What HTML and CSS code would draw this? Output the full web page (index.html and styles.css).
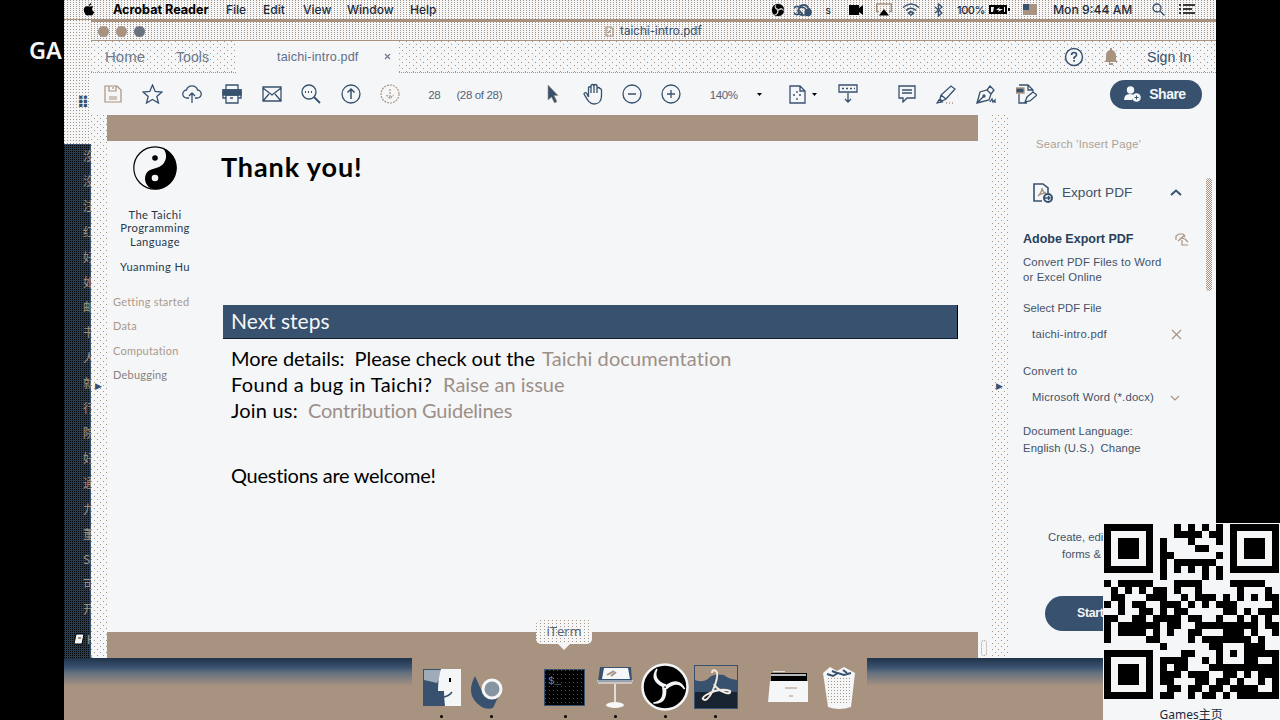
FILE: index.html
```html
<!DOCTYPE html>
<html lang="en">
<head>
<meta charset="utf-8">
<title>taichi-intro.pdf</title>
<link rel="stylesheet" href="styles.css">
</head>
<body>
<div class="stage">
  <div class="bar"><span class="ga">GA</span></div>
  <div class="desktop">
    <header class="menubar">
      <svg class="apple" width="12" height="13" viewBox="0 0 12 13"><path d="M6 3.5C7 3.4 8 2.7 10.500 3.600C8.500 5 8.800 8 11.300 9C10.500 11 9.300 12.800 8 12.500C6.800 12 6 12 5 12.500C3 13.300 0 8.500 1 5.500C1.800 3 4 3 6 3.500ZM5.800 3C5.800 1.500 6.800.5 8.200 0C8.400 1.500 7.300 2.900 5.800 3Z"/></svg>
      <b class="m-app">Acrobat Reader</b><span class="m1">File</span><span class="m2">Edit</span><span class="m3">View</span><span class="m4">Window</span><span class="m5">Help</span>
      <div class="status">
        <svg width="14" height="14" viewBox="0 0 48 48"><use href="#obs"/></svg>
        <svg width="18" height="14" viewBox="0 0 18 14" class="ln"><path d="M5 11a4 4 0 1 1 0-7c2-3 8-3 9 1a4 4 0 0 1 1 7H9L5 7m4 5a4 4 0 1 1 3-5" stroke-width="1.700"/><circle cx="14" cy="9.500" r="3" fill="#38516e"/></svg>
        <span class="s">s</span>
        <svg width="14" height="12" viewBox="0 0 14 12"><path d="M0 1h10v10H0zM10 4l4-3v10l-4-3z"/></svg>
        <svg width="16" height="13" viewBox="0 0 16 13"><path d="M3 8.500H.7V1h14.600v7.500H13" fill="none" stroke="#a89280" stroke-width="1.500"/><path d="M8 6l5 6.500H3z"/></svg>
        <svg width="18" height="13" viewBox="0 0 18 13" class="ln"><path d="M1 4.500q8-7 16 0M4 7.500q5-4.500 10 0M6.500 10q2.500-2.300 5 0L9 12z" stroke-width="1.500"/></svg>
        <svg width="9" height="14" viewBox="0 0 9 14" class="ln"><path d="M1 4l7 6-3.500 3V1L8 4 1 10"/></svg>
        <span class="pct">100%</span>
        <svg width="21" height="11" viewBox="0 0 21 11"><path d="M0 1h18v9H0zM19 4h2v3h-2z"/><path d="M2 3h3L4 8H2m5-2 4-3-1 2h4l-5 3 1-2zm8-3h1v5h-1" fill="#f4f6f8"/></svg>
        <svg width="14" height="11" viewBox="0 0 14 11"><path d="M0 0h14v11H0z" fill="#a89280"/><path d="M0 0h6v6H0z" fill="#38516e"/></svg>
        <span class="clock">Mon 9:44 AM</span>
        <svg width="13" height="13" viewBox="0 0 13 13" class="ln"><circle cx="5" cy="5" r="4"/><path d="M8 8l4.500 4.500"/></svg>
        <svg width="16" height="11" viewBox="0 0 16 11"><path d="M0 1h2M0 5h2M0 9h2M4 1h12M4 5h9M4 9h12" stroke="#000" stroke-width="1.500"/></svg>
      </div>
    </header>

    <aside class="behind">
      <div class="behind-top">⠿</div>
      <div class="behind-list"><i>沒</i><i>沒</i><i>注</i><i>红</i><i>好</i><i>如</i><i>邮</i><i>书</i><i>人</i><i>就</i><i>行</i><i>院</i><i>好</i><i>通</i><i>九</i><i>董</i><i>So</i><i>可</i><i>开</i></div>
      <div class="behind-foot"><svg width="12" height="12" viewBox="0 0 12 12"><path d="M3 1h8L9 11H1z" fill="#f4f6f8" stroke="#000"/><path d="M5 4h3v2H5z" fill="#a89280"/></svg>H</div>
    </aside>

    <main class="window">
      <div class="titlebar"><span class="dot"></span><span class="dot"></span><span class="dot third"></span>
        <span class="title"><svg width="9" height="11" viewBox="0 0 9 11" class="lb"><path d="M1 1h5l2 2v7H1zM3 7l3-3"/></svg>taichi-intro.pdf</span></div>
      <nav class="tabs">
        <span class="home">Home</span><span class="tools">Tools</span>
        <div class="tab"><span>taichi-intro.pdf</span><svg width="7" height="7" viewBox="0 0 7 7" class="lb"><path d="M1 1l5 5M6 1L1 6" stroke="#6c7a8c"/></svg></div>
        <svg class="help" width="20" height="20" viewBox="0 0 20 20"><circle cx="10" cy="10" r="8.500" fill="#f4f6f8" stroke="#38516e" stroke-width="1.500"/><path d="M7.500 8q.2-2.500 2.600-2.500T12.500 8q0 1-2.400 2.500v1.500m0 1v1.700" fill="none" stroke="#38516e" stroke-width="1.700"/></svg>
        <svg class="bell" width="14" height="17" viewBox="0 0 14 17"><path d="M6 0h2v2q4 1 4 6v4l2 2H0l2-2V8q0-5 4-6zM5 15h4v2H5z" fill="#a89280"/></svg>
        <span class="sign">Sign In</span>
      </nav>
      <div class="toolbar">
        <svg width="18" height="18" viewBox="0 0 18 18" class="lb"><path d="M1 1h12l4 4v12H1zM5 1v5h7V1M5 12h8M5 14h8M9 2v2"/></svg>
        <svg width="21" height="20" viewBox="0 0 21 20" class="ln"><path d="M10.500 1l2.700 6.500 6.800.5-5.200 4.400L16.500 19l-6-3.600L4.500 19l1.700-6.600L1 8l6.800-.5z"/></svg>
        <svg width="20" height="20" viewBox="0 0 20 20" class="ln"><path d="M7 14H5a4 4 0 0 1-.5-8C6 .5 14 .5 15.500 6A4 4 0 0 1 15 14h-2M10 19V9M7 12l3-3 3 3"/></svg>
        <svg width="20" height="20" viewBox="0 0 20 20" class="ln"><path d="M4 6V1h12v5M4 14H1V6h18v8h-3"/><path d="M1 6h18v5H1z" fill="#38516e"/><path d="M4 11h12v8H4zM8 14h3"/></svg>
        <svg width="20" height="16" viewBox="0 0 20 16" class="ln"><path d="M1 1h18v14H1zM1 2l9 7 9-7M1 15l6-7M19 15l-6-7"/></svg>
        <svg width="20" height="20" viewBox="0 0 20 20" class="ln"><circle cx="8" cy="8" r="7"/><path d="M13 13l6 6M4 8h1m2 0h1m2 0h1" stroke-width="1.800"/></svg>
        <svg width="20" height="20" viewBox="0 0 20 20" class="ln"><circle cx="10" cy="10" r="9"/><path d="M10 15V5M6.500 8.500L10 5l3.500 3.500" stroke-width="1.500"/></svg>
        <svg width="20" height="20" viewBox="0 0 20 20" class="lb dash"><circle cx="10" cy="10" r="9"/><path d="M10 5v9M6.500 11l3.500 3.500 3.500-3.500"/></svg>
        <span class="tt">28</span><span class="tt">(28 of 28)</span><i></i>
        <svg width="12" height="19" viewBox="0 0 12 19"><path d="M1 0l10 10.500H7l3 6-2.500 1.500-3-6L1 15z" fill="#38516e" stroke="#a89280" stroke-width=".6"/></svg>
        <svg width="20" height="22" viewBox="0 0 20 22" class="ln"><path d="M5.500 14V4.500q1.200-1.500 2.500 0V10 2.500q1.500-2 3 0V10 2.500q1.500-2 3 0V10 5.500q1.500-2 3 0 1 0 1.500 1.500V13c0 5-3 8-7.500 8C6 21 4 16 1 11q.5-2 2.500-1l2 4"/></svg>
        <svg width="20" height="20" viewBox="0 0 20 20" class="ln"><circle cx="10" cy="10" r="9"/><path d="M6 10h8"/></svg>
        <svg width="20" height="20" viewBox="0 0 20 20" class="ln"><circle cx="10" cy="10" r="9"/><path d="M6 10h8M10 6v8"/></svg>
        <span class="tt zoomv">140%</span><svg width="5" height="3" viewBox="0 0 5 3"><path d="M0 0h5L2.500 3z"/></svg><i></i>
        <svg width="17" height="19" viewBox="0 0 17 19" class="ln"><path d="M1 1h10l5 5v12H1zM11 1v5h5M8 6v2m0 5v2M4 10h2m4 0h2"/></svg>
        <svg width="5" height="3" viewBox="0 0 5 3"><path d="M0 0h5L2.500 3z"/></svg>
        <svg class="scroll ln" width="20" height="20" viewBox="0 0 20 20"><path d="M1 1h18v7H1zM10 9v9M7 15l3 3 3-3"/><path d="M4 4.500h13" stroke-dasharray="2 2"/></svg>
        <svg width="18" height="18" viewBox="0 0 18 18" class="ln"><path d="M1 1h16v12H9l-4 4v-4H1zM4 5h10M4 8h10"/></svg>
        <svg width="20" height="19" viewBox="0 0 20 19" class="ln"><path d="M1 18l2-3 3 2zM4 14l1-4L15 1l4 3-9 10-4 2zM5 10l5 4"/><path d="M10 18h8" stroke="#a89280" stroke-dasharray="1 2"/></svg>
        <svg width="20" height="19" viewBox="0 0 20 19" class="ln"><path d="M1 18l3-11 7-2 4 4-2 6zM1 18l7-7M11 5l3-4 4 4-3 4M14 17l2-3 1 3 2-2v3"/><circle cx="8" cy="11" r="1"/></svg>
        <svg width="21" height="20" viewBox="0 0 21 20" class="ln"><path d="M3 10v9h8M3 1h9l5 5v2M12 1v5h5M9 18l2-5 6-5 4 3-7 6z"/><path d="M0 4h8v5H0z" fill="#38516e" stroke="#a89280"/></svg>
        <i></i>
        <button class="share"><svg width="17" height="16" viewBox="0 0 17 16"><g fill="#f4f6f8"><circle cx="6.500" cy="4" r="3.700"/><path d="M0 14q0-6 6-6 3 0 4 2l-2 4z"/><circle cx="12.500" cy="11.500" r="4.300"/></g><path d="M10.500 11.500h4m-2-2v4" stroke="#38516e"/></svg>Share</button>
      </div>

      <div class="content">
        <div class="rail"><span>▶</span></div>
        <section class="viewer">
          <div class="slide">
            <aside class="outline">
              <svg class="taichi" width="44" height="44" viewBox="0 0 44 44"><circle cx="22" cy="22" r="21.200" fill="#f4f6f8" stroke="#000" stroke-width="1.200"/><path d="M30 2.300A21.200 21.200 0 0 1 20 43.100C11 41 9 28 17 24L26 21C34 17 35 8 30 2.300Z"/><circle cx="22" cy="12" r="2.800"/><circle cx="22" cy="32" r="3.300" fill="#f4f6f8"/></svg>
              <p class="name">The Taichi<br>Programming<br>Language</p><p class="name author">Yuanming Hu</p>
              <ul><li>Getting started</li><li>Data</li><li>Computation</li><li class="o4">Debugging</li></ul>
            </aside>
            <article class="page">
              <h1>Thank you!</h1>
              <h2>Next steps</h2>
              <p><span class="l1">More details:&nbsp; Please check out the</span><a class="a1">Taichi documentation</a></p>
              <p><span class="l2">Found a bug in Taichi?</span><a class="a2">Raise an issue</a></p>
              <p><span class="l3">Join us:</span><a class="a3">Contribution Guidelines</a></p>
              <p class="q">Questions are welcome!</p>
            </article>
          </div>
        </section>
        <div class="rail right"><span>▶</span><b></b></div>
        <aside class="panel">
          <p class="search">Search 'Insert Page'</p>
          <div class="row exp"><svg width="21" height="20" viewBox="0 0 21 20" class="ln"><path d="M9 18H1V1h9l5 4v5" stroke-width="1.600"/><path d="M5 13q4-4 4-8 1 5 4 5-5 0-8 3" stroke="#a89280"/><circle cx="15" cy="15" r="4" stroke-width="2"/><path d="M12 15h5m-2-2l2 2-2 2"/></svg><span>Export PDF</span><svg class="chev" width="12" height="7" viewBox="0 0 12 7"><path d="M1 6l5-4.500L11 6" fill="none" stroke="#38516e" stroke-width="2"/></svg></div>
          <div class="row adobe"><b>Adobe Export PDF</b><svg width="14" height="13" viewBox="0 0 14 13" class="lb"><path d="M1 7V3l3-2h4l2 3M3 8l7-6M5 5l5 1 3 3M7 7v5h6"/></svg></div>
          <p class="conv">Convert PDF Files to Word<br>or Excel Online</p>
          <p class="sel">Select PDF File</p>
          <div class="row file"><span>taichi-intro.pdf</span><svg width="11" height="11" viewBox="0 0 11 11" class="lb"><path d="M1 1l9 9M10 1l-9 9"/></svg></div>
          <p class="ct">Convert to</p>
          <div class="row word"><span>Microsoft Word (*.docx)</span><svg width="10" height="6" viewBox="0 0 10 6" class="lb"><path d="M1 1l4 4 4-4"/></svg></div>
          <p class="lang">Document Language:<br>English (U.S.)&nbsp; Change</p>
          <p class="create">Create, edit and sign<br><span>forms &amp; agreements</span></p>
          <button class="start">Start Free Trial</button>
          <div class="thumb"></div>
        </aside>
      </div>
    </main>

    <div class="shadow"></div>
    <footer class="dock">
      <svg class="finder" width="38" height="37" viewBox="0 0 38 37"><path d="M0 0h22v37H0z" fill="#38516e"/><path d="M1 1h17v6L14 14 1 11z" fill="#f4f6f8" opacity=".55"/><path d="M18 0h20v37H22q-1-8-1-15h-6q0-12 3-22z" fill="#f4f6f8"/><path d="M27 9v4" stroke="#000" stroke-width="2"/><path d="M21 28q5-1 8-5" fill="none" stroke="#38516e" stroke-width="1.500"/></svg>
      <svg class="chrome" width="34" height="34" viewBox="0 0 34 34"><path d="M4 0Q-4 15 4 25q8 10 18 7L29 17 12 18z" fill="#38516e"/><circle cx="21" cy="13" r="9" fill="#8794a1" stroke="#f4f6f8" stroke-width="3"/></svg>
      <div class="iterm">$_</div>
      <svg class="keynote" width="36" height="41" viewBox="0 0 36 41"><path d="M3 0h31l1 15H1z" fill="#38516e"/><path d="M7 1h24l2 11H5z" fill="#f4f6f8"/><path d="M10 8l7-4M14 9l5-4" stroke="#a89280" stroke-width="2"/><path d="M0 14h36M1 16h34" stroke="#f4f6f8"/><path d="M18 17v20" stroke="#f4f6f8" stroke-width="1.500"/><ellipse cx="18" cy="38" rx="9" ry="3" fill="#f4f6f8"/></svg>
      <svg width="48" height="48" viewBox="0 0 48 48"><g id="obs"><circle cx="24" cy="24" r="22.500" fill="#000" stroke="#f4f6f8" stroke-width="2.500"/><g id="blade"><path d="M23 24Q8 17 16 6Q11 17 25 22" fill="#f4f6f8" stroke="#f4f6f8" stroke-width="1.500"/></g><use href="#blade" transform="rotate(120 24 24)"/><use href="#blade" transform="rotate(240 24 24)"/></g></svg>
      <svg class="acro" width="44" height="44" viewBox="0 0 44 44"><path d="M0 0h44v44H0z" fill="#38516e"/><path d="M1 1h42v14Q34 14 30 10 18 8 14 14 8 18 1 15z" fill="#a89280"/><path d="M1 27h42v16H1z" fill="#172331"/><path d="M18 8q0-4 4-2 3 2-1 14-5 14-10 15-5-1 1-5 14-8 24-4 1 3-4 2-9-3-12-9" fill="none" stroke="#f4e9df" stroke-width="2"/></svg>
      <svg class="folder" width="41" height="32" viewBox="0 0 41 32"><path d="M3 2h36v9H3z" fill="#000"/><path d="M5 0h12M3 4h35" stroke="#f4f6f8" stroke-width="1.500"/><path d="M2 10h38v21H0z" fill="#f4f6f8"/><path d="M17 17h12m-8 8h4" stroke="#a89280"/></svg>
      <svg class="trash" width="34" height="43" viewBox="0 0 34 43"><path d="M1 7L8 1l7 4 7-4 11 6-4 34q-12 4-23 0z" fill="#f4f6f8"/><path d="M5 8l6 2 5-3 6 2 7-2M10 5l5 2M21 4l4 3" fill="none" stroke="#38516e" stroke-width="2"/><path d="M4 12h26l-3 27H7z" fill="url(#mesh)"/><pattern id="mesh" width="3" height="3" patternUnits="userSpaceOnUse"><path d="M0 0h1v1H0z" fill="#a89280"/></pattern></svg>
      <div class="runs"><i></i><i></i><i></i><i></i><i></i><i></i></div>
    </footer>
    <div class="tip">iTerm</div>
  </div>
  <div class="bar"></div>
  <div class="qr"><svg id="code" width="175" height="175" viewBox="0 0 25 25" shape-rendering="crispEdges"></svg><span>Games主页</span></div>
</div>
<script src="qr.js"></script>
</body>
</html>
```
FILE: styles.css
```css
:root{--b:#a89280;--l:#f4f6f8;--n:#38516e;
 --check:conic-gradient(var(--b) 25%,var(--l) 0 50%,var(--b) 0 75%,var(--l) 0);
 --dot:conic-gradient(at 1px 1px,transparent 75%,var(--b) 0)}
*{box-sizing:border-box}
body{margin:0;background:#000;overflow:hidden;font-family:"Liberation Sans",Arial,sans-serif;color:var(--n)}
p,h1,h2,ul{margin:0;padding:0;font-weight:400;list-style:none}
svg{display:block;flex:none}
.ln{fill:none;stroke:var(--n);stroke-width:1.3}
.lb{fill:none;stroke:var(--b);stroke-width:1.2}
.dash{stroke-dasharray:2 1}
.stage{display:flex;width:1280px;height:720px;position:relative;overflow:hidden}
.bar{width:64px;background:#000;flex:none}
.ga{display:block;padding:35px 0 0 29px;font:600 23.5px/30px "Noto Sans",sans-serif;color:var(--l)}
.desktop{width:1152px;position:relative;background:var(--b);overflow:hidden}
.menubar{height:20px;display:flex;align-items:center;background:var(--dot) 0 0/3px 2px,var(--l);border-bottom:1px solid var(--b);font:500 12px/20px Inter,sans-serif;color:#1c2c3f;white-space:nowrap}
.apple{margin-left:19px}
.m-app{margin-left:18px;width:113px;color:#000;font-weight:700;font-size:12.6px}
.m1{width:37px}.m2{width:40px}.m3{width:44px}.m4{width:63px}.m5{width:40px}
.status{margin-left:auto;padding-right:21px;display:flex;align-items:center}
.status svg:nth-child(1){margin-right:12px}
.s{margin:0 16px 0 12px;font-size:10px;position:relative;left:-2px}
.status svg:nth-child(4){margin-right:13px}.status svg:nth-child(5){margin-right:10px}.status svg:nth-child(6){margin-right:14px}.status svg:nth-child(7){margin-right:14px}
.status svg:nth-child(2){margin-right:4px;margin-left:-3px}
.pct{width:32px;font-size:11px;letter-spacing:-.4px}
.status svg:nth-child(9){margin-right:13px}
.clock{padding-left:16px;box-sizing:content-box;width:83px;font-size:12.2px}
.status svg:nth-child(12){margin:0 14px 0 16px}

.behind{position:absolute;left:0;top:20px;width:27px;height:638px;display:flex;flex-direction:column;overflow:hidden}
.behind-top{height:124px;background:var(--dot) 0 0/3px 3px,var(--l);padding:73px 0 0 13px;font:700 16px/20px "DejaVu Sans",sans-serif;color:var(--n)}
.behind-list{flex:1;border-top:1px solid var(--n);background:conic-gradient(at 1px 1px,transparent 75%,#000 0) 0 0/2px 2px,#263a50;padding-left:19px;border-right:1px solid var(--n)}
.behind-list i{display:block;height:25.2px;font:12px/22px "Noto Sans CJK SC",sans-serif;color:var(--b);white-space:nowrap}
.behind-foot{position:absolute;left:9px;bottom:11px;display:flex;gap:2px;font:12px/14px "Liberation Sans",sans-serif;color:var(--b)}

.window{position:absolute;left:27px;top:22px;width:1125px;height:636px;background:var(--l);display:flex;flex-direction:column;border-radius:0 0 4px 4px;overflow:hidden}
.titlebar{height:19px;flex:none;display:flex;align-items:center;gap:7px;padding-left:7px;background:var(--dot) 0 0/3px 2px,var(--l);border-bottom:1px solid var(--b)}
.dot{width:11px;height:11px;border-radius:50%;background:var(--b)}
.third{background:#697180}
.title{display:flex;gap:6px;margin-left:453px;font:11.700px/16px Inter,sans-serif;align-items:center}
.tabs{height:32px;flex:none;display:flex;align-items:center;background:var(--dot) 0 0/7px 6px,var(--dot) 3px 3px/7px 6px,var(--l);border-bottom:1px dotted var(--b);font-size:14.2px}
.home{margin-left:14px;width:71px;font-size:15px}.tools{width:61px}
.home,.tools{color:#6c7a8c}
.tab{width:162px;height:32px;background:var(--l);display:flex;align-items:center;padding-left:40px;font-size:12.6px;color:#607089}
.tab span{width:107px;letter-spacing:.15px}
.help{margin-left:665px}.bell{margin-left:20px}.sign{margin-left:29px}
.toolbar{height:42px;flex:none;padding-left:2.500px;display:grid;align-items:center;justify-items:center;white-space:nowrap;
grid-template-columns:repeat(8,39.600px) 48px 42px 30px 45px 36px 41px 38px 65px 8px 20px 29px 5px 71px 38px 40px 40px 40px 64px 92px}
.scroll{margin-right:9px}
.tt{font-size:11.500px;color:#566378;letter-spacing:-.35px;padding-top:1px}
.zoomv{padding-left:2px}
.share{border:0;width:92px;height:29px;border-radius:15px;background:var(--n);color:var(--l);display:flex;align-items:center;gap:8px;padding:0 0 0 14px;font:700 14px "Liberation Sans",sans-serif;letter-spacing:-.5px}
.content{flex:1;display:flex;min-height:0}
.rail{width:16px;flex:none;background:var(--dot) 0 0/6px 6px,var(--dot) 3px 3px/6px 6px,var(--l);padding-top:263px;font-size:9px;line-height:16px}
.rail span{display:block;padding-left:4px;font-family:"DejaVu Sans",sans-serif}
.viewer{width:871px;flex:none;background:var(--b);padding:26px 0}
.slide{height:490.500px;background:var(--l);display:flex;font-family:Lato,sans-serif;color:#000}
.outline{width:113px;flex:none;padding:5px 0 0 6px}
.taichi{margin:0 0 18px 20px}
.name{width:84px;text-align:center;font-size:11.200px;line-height:13.300px;letter-spacing:.4px;color:#27384c;white-space:nowrap}
.author{margin-top:12px}
.outline ul{margin-top:17px;color:#ac9889;font-size:11px;line-height:24.300px}
.outline li{white-space:nowrap;letter-spacing:.22px}
.outline .o4{color:#87827e}
.page{padding:10px 0 0 2px;white-space:nowrap;flex:none;width:738px}
h1{font-size:27px;line-height:32px;font-weight:700;letter-spacing:.9px;margin-left:-1px}
h2{margin:122px 0 6px 1px;width:735px;height:34px;background:var(--n);color:var(--l);font-size:21px;line-height:32px;padding-left:8px;border-bottom:1px solid #10202e;letter-spacing:0;border-right:1px solid #000}
.page p{font-size:20px;line-height:26px;padding-left:9px;display:flex}
.page a{color:#9c8f87}
.l1{width:311px;letter-spacing:-.05px}.l2{width:212px;letter-spacing:.4px}.l3{width:77px;letter-spacing:.2px}
.a1{letter-spacing:.1px}.a3{letter-spacing:-.2px}
.page .q{margin-top:39px;letter-spacing:-.27px}
.right{margin-left:14px;width:17px;position:relative}
.panel{width:207px;position:relative;padding-left:14px;font-size:11.300px;color:#435268;white-space:nowrap;line-height:15.500px}
.search{padding:22px 0 0 13px;color:#b0a092;letter-spacing:.2px}
.row{display:flex;align-items:center}
.exp{padding-left:10px;margin-top:30px;font-size:13.600px;height:20px}
.exp span{margin-left:8px;width:108px}
.adobe{margin-top:29px;height:16px;font-size:12.500px;color:#283f5b}
.adobe b{width:152px}
.conv{margin-top:7px;letter-spacing:.15px}
.sel{margin-top:15px}
.file{margin-top:11px;padding-left:9px}.file span{width:139px;letter-spacing:.25px}
.ct{margin-top:21px;letter-spacing:.2px}
.word{margin-top:11px;padding-left:9px}.word span{width:138px;letter-spacing:.18px}
.lang{margin-top:17px;line-height:17.500px;letter-spacing:.1px}
.create{margin:71px 0 0 25px;line-height:17px}.create span{padding-left:14px}
.start{margin:33px 0 0 22px;border:0;width:160px;height:35px;border-radius:18px;background:var(--n);color:var(--l);font:700 12.300px "Liberation Sans",sans-serif;text-align:left;padding-left:32px;letter-spacing:-.3px}
.thumb{position:absolute;left:197px;top:63px;width:6px;height:113px;border-radius:3px;background:var(--check) 0 0/2px 2px}
.right b{position:absolute;left:-11px;bottom:2px;width:6px;height:16px;border-radius:3px;border:1px dotted var(--b)}

.shadow{position:absolute;left:0;top:658px;width:1152px;height:30px;background:linear-gradient(#20334a,#38516e 9px,#667180 15px,#a89280 28px)}
.dock{position:absolute;left:348px;top:658px;width:455px;height:62px;background:var(--b);display:flex;align-items:center;padding-left:11px}
.dock>svg,.iterm{margin-top:-4px}
.dock .chrome{margin:8px 0 0 10px}
.iterm{width:41px;height:37px;margin-left:39px;border:1px solid var(--n);background:conic-gradient(at 1px 1px,transparent 75%,#38516e 0) 0 0/4px 4px,#000;color:#6e8197;font:11px/22px "Liberation Mono",monospace;padding-left:3px}
.keynote{margin-left:12px}.keynote+svg{margin-left:8px}
.acro{margin-left:5px}.folder{margin-left:30px}.trash{margin-left:13px}
.runs{position:absolute;left:28px;top:57px;display:flex}
.runs i{width:3px;height:3px;border-radius:50%;background:#000;margin-right:47px}
.runs i:nth-child(2){margin-right:71px}
.tip{position:absolute;left:472px;top:620px;width:56px;height:24px;border-radius:5px;background:var(--dot) 0 0/4px 3px,var(--l);font:13px/23px "Open Sans",sans-serif;text-align:center;color:#536279}
.tip:after{content:"";position:absolute;left:22px;top:24px;border:6px solid transparent;border-top-color:var(--l);border-bottom:0}
.qr{position:absolute;left:1103px;top:523px;width:177px;height:197px;background:var(--l);display:flex;flex-direction:column;padding-top:1px;padding-left:.6px;overflow:hidden}
.qr span{font:12px/20px "Noto Sans","Noto Sans CJK SC",sans-serif;color:#1b2a3b;padding:6px 0 0 56px;white-space:nowrap}
```
FILE: qr.js
```js
// Dark modules of the code, one entry per row, as columns and column ranges.
const rows = [
  "0-6 10 12 14 16 18-24",
  "0 6 10-13 15-16 18 24",
  "0 2-4 6 8 12 16 18 20-22 24",
  "0 2-4 6 8 13-14 18 20-22 24",
  "0 2-4 6 8-9 16 18 20-22 24",
  "0 6 8 10-15 18 24",
  "0-6 8 10 12 14 16 18-24",
  "8 14 16",
  "0 2-6 10-13 18-22",
  "1 3 5 7-8 10 13 19 23",
  "1-2 6-8 11 13-15 17 19 21 23-24",
  "0 2 4-5 8-10 12 14 16-18 24",
  "2 5-6 8 10-11 17-18 20 22-24",
  "0-1 4-5 7-10 12-13 16 19 21 23",
  "0 2-7 9-10 13-21 23-24",
  "0 2-5 7 9 12-13 17-19 21 24",
  "0 6-7 12 14-20 22",
  "8 15-16 20-22",
  "0-6 11-12 16 18 20-24",
  "0 6 8-11 14 16 20-21 24",
  "0 2-4 6 8 10-11 15-24",
  "0 2-4 6 8-10 12-14 17-18 20 22-24",
  "0 2-4 6 8-9 13-14 16-17 19 22 24",
  "0 6 9-10 12-13 15-16 18-21 24",
  "0-6 8-9 12 14-15 17 19-24"
];
let d = "";
rows.forEach((row, y) => {
  for (const part of row.split(" ")) {
    const [a, b = a] = part.split("-").map(Number);
    d += `M${a} ${y}h${b - a + 1}v1H${a}z`;
  }
});
document.getElementById("code").innerHTML = `<path d="${d}"/>`;
```
